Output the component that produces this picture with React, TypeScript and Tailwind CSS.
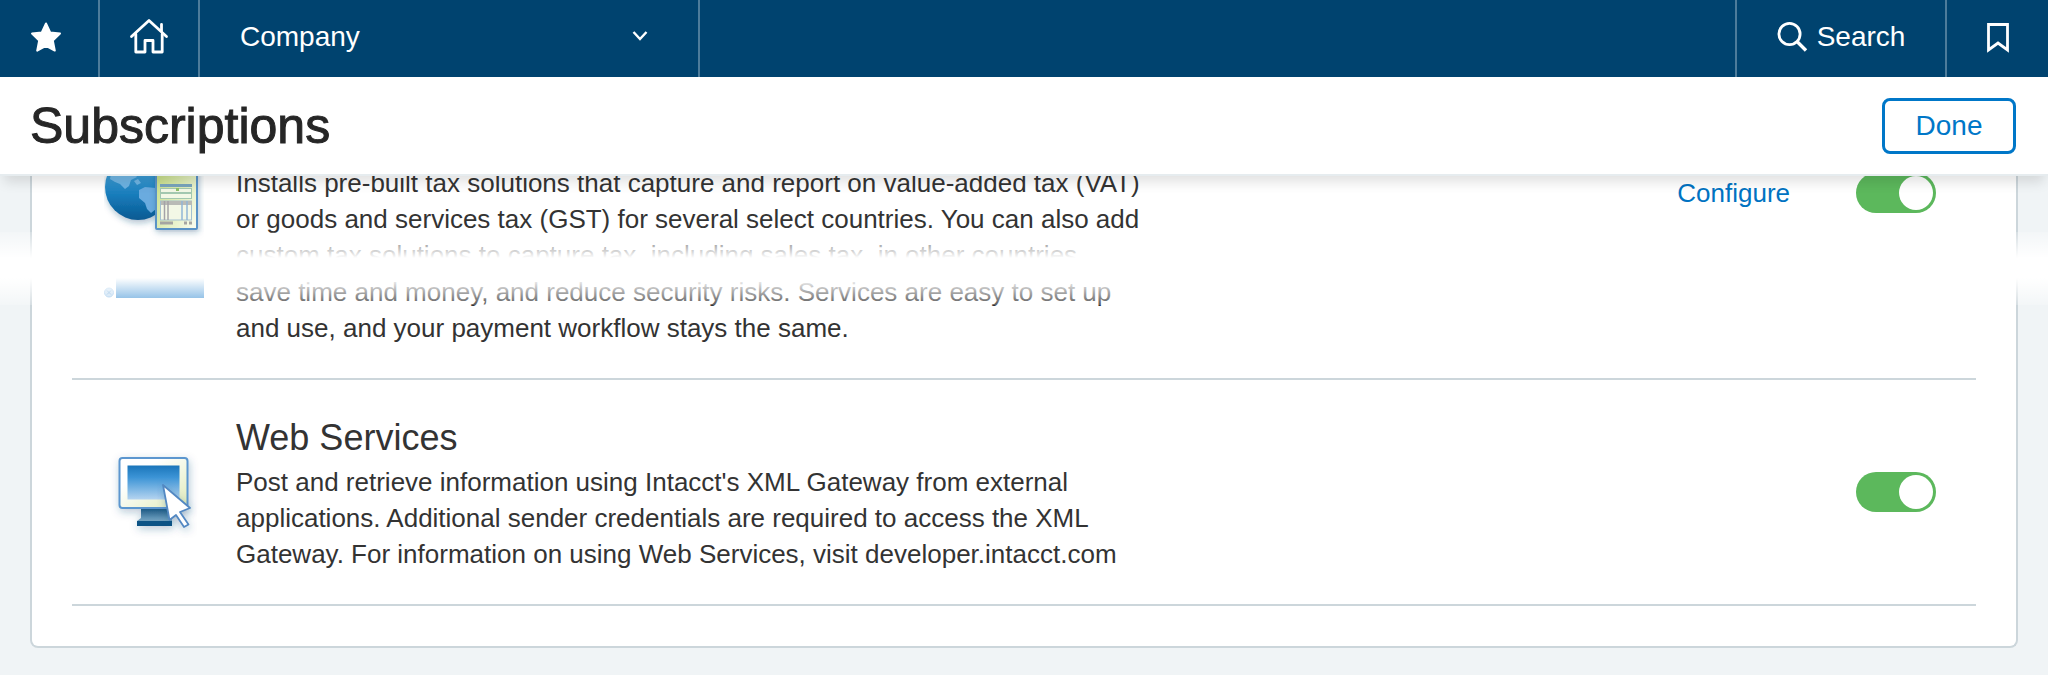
import { useState, type FC, type ReactNode } from "react"

const Star = () => (
  <svg className="size-8" viewBox="0 0 32 32" fill="#fff" aria-hidden="true">
    <path
      d="M16 2.500 20.200 11.400 30 12.600 22.800 19.400 24.800 29.600 16 24.800 7.200 29.600 9.200 19.400 2 12.600 11.800 11.400Z"
      stroke="#fff"
      strokeWidth="2"
      strokeLinejoin="round"
    />
  </svg>
)

const Home = () => (
  <svg
    className="size-10"
    viewBox="0 0 40 40"
    fill="none"
    stroke="#fff"
    strokeWidth="2.8"
    strokeLinecap="round"
    strokeLinejoin="round"
    aria-hidden="true"
  >
    <path d="M2.500 19.500 20 3.500 37.500 19.500" />
    <path d="M32.500 14V7.500" />
    <path d="M6.800 17V35H16V23.500H24V35H33.200V17" />
  </svg>
)

const Chevron = () => (
  <svg
    className="pointer-events-none size-5 shrink-0"
    viewBox="0 0 20 20"
    fill="none"
    stroke="#fff"
    strokeWidth="2.4"
    aria-hidden="true"
  >
    <path d="M3.500 5 10 12 16.500 5" />
  </svg>
)

const Magnifier = () => (
  <svg
    className="size-8"
    viewBox="0 0 32 32"
    fill="none"
    stroke="#fff"
    strokeWidth="2.8"
    aria-hidden="true"
  >
    <circle cx="12.500" cy="13" r="10.600" />
    <path d="M20 20.500 29 29.500" strokeWidth="3.400" />
  </svg>
)

const Bookmark = () => (
  <svg
    className="size-8"
    viewBox="0 0 32 32"
    fill="none"
    stroke="#fff"
    strokeWidth="2.800"
    aria-hidden="true"
  >
    <path d="M6.500 3.500H25.500V29L16 22 6.500 29Z" />
  </svg>
)

const TaxIcon = () => (
  <svg
    className="size-[100px] shrink-0"
    viewBox="0 0 100 100"
    aria-hidden="true"
  >
    <defs>
      <linearGradient id="globe" x1="0" y1="0" x2="0" y2="1">
        <stop offset="0.3" stopColor="#3f9fd8" />
        <stop offset="0.65" stopColor="#1479b8" />
        <stop offset="1" stopColor="#0d5a92" />
      </linearGradient>
      <linearGradient id="sheet" x1="0" y1="0" x2="1" y2="1">
        <stop offset="0.2" stopColor="#c9e08c" />
        <stop offset="1" stopColor="#fbfdf2" />
      </linearGradient>
      <filter id="soft" x="-20%" y="-20%" width="140%" height="150%">
        <feDropShadow
          dx="1"
          dy="3"
          stdDeviation="3"
          floodColor="#1b4f7a"
          floodOpacity="0.35"
        />
      </filter>
      <clipPath id="globeClip">
        <circle cx="34" cy="22" r="33" />
      </clipPath>
    </defs>
    <circle cx="34" cy="22" r="33" fill="url(#globe)" filter="url(#soft)" />
    <g clipPath="url(#globeClip)" fill="#8cc4ee">
      <path
        d="M8 4 28 5 33 12 27 15 25 21 21 24 16 19 11 17 6 14Z"
        opacity="0.7"
      />
      <path d="M30 16 34 14 37 18 33 20Z" opacity="0.7" />
      <path
        d="M35 25 41 22 52 23V44L47 48 43 44 41 38 35 33Z"
        fill="#6aabdf"
      />
    </g>
    <g filter="url(#soft)">
      <rect
        x="52"
        y="-12"
        width="41"
        height="76"
        rx="1"
        fill="url(#sheet)"
        stroke="#5a93c6"
        strokeWidth="2"
      />
    </g>
    <rect x="56" y="19" width="32" height="3" fill="#7aa5bd" />
    <g fill="#f3f8e6" stroke="#a3c8b0" strokeWidth="1">
      <rect x="56.500" y="23.500" width="31" height="4" />
      <rect x="56.500" y="28.500" width="31" height="5" />
      <rect x="56.500" y="36" width="31" height="19" stroke="#a3c0d0" />
    </g>
    <rect x="72" y="23" width="3" height="3" fill="#8fc06c" />
    <rect x="57" y="36" width="31" height="4" fill="#b9bbb6" />
    <path d="M60.500 36V55M64 36V55" stroke="#a5a2a8" strokeWidth="1.500" />
    <path d="M78 36V55M83 36V55" stroke="#93b7d6" strokeWidth="1.500" />
    <path
      d="M56 58H69M80 58H83M85 58H88"
      stroke="#a5a5a2"
      strokeWidth="3"
    />
  </svg>
)

const PaymentIcon = () => (
  <svg
    className="h-6 w-[100px] shrink-0"
    viewBox="0 0 100 24"
    aria-hidden="true"
  >
    <rect x="12" y="0" width="89" height="24" fill="#4e9ad8" />
    <circle
      cx="5"
      cy="18.500"
      r="4.500"
      fill="#b9d7f0"
      stroke="#8fbfe8"
      strokeWidth="1"
    />
    <path d="M3 16.500 7 20.500M7 16.500 3 20.500" stroke="#6ba6da" />
  </svg>
)

const MonitorIcon = () => (
  <svg
    className="size-[100px] shrink-0"
    viewBox="0 0 100 100"
    aria-hidden="true"
  >
    <defs>
      <linearGradient id="screen" x1="0" y1="0" x2="0" y2="1">
        <stop offset="0" stopColor="#1a75ba" />
        <stop offset="0.35" stopColor="#3c94d6" />
        <stop offset="1" stopColor="#b5d4f0" />
      </linearGradient>
      <linearGradient id="bezel" x1="0" y1="0" x2="1" y2="1">
        <stop offset="0.3" stopColor="#fff" />
        <stop offset="1" stopColor="#e0eab8" />
      </linearGradient>
      <linearGradient id="stand" x1="0" y1="0" x2="0" y2="1">
        <stop offset="0" stopColor="#0e4c78" />
        <stop offset="0.6" stopColor="#5f93b5" />
        <stop offset="1" stopColor="#8cb3cb" />
      </linearGradient>
      <filter id="glow" x="-20%" y="-20%" width="145%" height="145%">
        <feDropShadow
          dx="1"
          dy="3"
          stdDeviation="4"
          floodColor="#1b4f7a"
          floodOpacity="0.3"
        />
      </filter>
    </defs>
    <g filter="url(#glow)">
      <path d="M37 65H67V76L68 77V83H33V79L37 76Z" fill="url(#stand)" />
      <path d="M33 79H68V84H33Z" fill="#0f5285" />
      <rect
        x="15.500"
        y="16"
        width="68"
        height="50"
        rx="3"
        fill="url(#bezel)"
        stroke="#5b96cf"
        strokeWidth="2"
      />
    </g>
    <rect x="23.500" y="23.500" width="52" height="34" fill="url(#screen)" />
    <path
      d="M59 43 86 66 76 70 84.500 82.500 80 85 72 73 65.500 78Z"
      fill="#fff"
      stroke="#5288c2"
      strokeWidth="1.800"
      strokeLinejoin="round"
      filter="url(#glow)"
    />
  </svg>
)

const Toggle: FC<{ label: string }> = ({ label }) => {
  const [on, setOn] = useState(true)

  return (
    <input
      type="checkbox"
      role="switch"
      aria-label={label}
      checked={on}
      onChange={(evt) => setOn(evt.target.checked)}
      className="flex h-10 w-20 shrink-0 cursor-pointer appearance-none items-center rounded-full bg-gray-400 px-[3px] before:size-[34px] before:rounded-full before:bg-white checked:justify-end checked:bg-[#5cb85c]"
    />
  )
}

const Description: FC<{ title?: string; children: ReactNode }> = ({
  title,
  children,
}) => (
  <div className="w-[920px]">
    {title ? <h2 className="text-[36px] leading-[52px]">{title}</h2> : null}
    <p>{children}</p>
  </div>
)

const TopBar = () => (
  <nav className="flex h-[77px] bg-[#00436f] text-[28px] text-white">
    <button
      aria-label="Favorites"
      className="flex w-[100px] items-center border-r-2 border-[#4d7c9b] pb-1 pl-[30px]"
    >
      <Star />
    </button>
    <button
      aria-label="Home"
      className="flex w-[100px] items-center justify-center border-r-2 border-[#4d7c9b] pb-1"
    >
      <Home />
    </button>
    <label className="flex w-[500px] items-center border-r-2 border-[#4d7c9b] pr-12 pb-1">
      <select
        aria-label="Application"
        className="h-full grow cursor-pointer appearance-none bg-transparent pl-10"
      >
        <option>Company</option>
      </select>
      <Chevron />
    </label>
    <button className="ml-auto flex w-[210px] items-center justify-center gap-2 border-l-2 border-[#4d7c9b] pb-1">
      <Magnifier />
      Search
    </button>
    <button
      aria-label="Bookmarks"
      className="flex w-[103px] items-center justify-center border-l-2 border-[#4d7c9b] pb-1"
    >
      <Bookmark />
    </button>
  </nav>
)

export default function App() {
  return (
    <div className="min-h-screen bg-[#f0f4f6] font-['Liberation_Sans',Arial,sans-serif] text-[26px] leading-9 text-[#333]">
      <header className="relative z-10 border-b-2 border-[#e6ecef] bg-white shadow-[0_10px_12px_-4px_rgba(0,0,0,0.12)]">
        <TopBar />
        <div className="flex h-[97px] items-center justify-between pr-8 pl-[30px]">
          <h1 className="text-[50px] text-[#262626] [-webkit-text-stroke:1px_#262626]">
            Subscriptions
          </h1>
          <button className="h-14 w-[134px] rounded-lg border-3 border-[#0077c8] text-[28px] text-[#0077c8]">
            Done
          </button>
        </div>
      </header>

      <main className="relative -mt-[11px] pb-7">
        <section className="mx-[30px] rounded-b-lg border-2 border-t-0 border-[#ccd6db] bg-white px-10 pb-10">
          <div className="flex h-24 items-start gap-8 pr-10 pl-8">
            <TaxIcon />
            <Description>
              Installs pre-built tax solutions that capture and report on
              value-added tax (VAT) or goods and services tax (GST) for several
              select countries. You can also add custom tax solutions to capture
              tax, including sales tax, in other countries.
            </Description>
            <div className="mt-2 ml-auto flex items-center gap-[66px] leading-10">
              <a href="#configure" className="text-[#0073c2]">
                Configure
              </a>
              <Toggle label="Taxes" />
            </div>
          </div>

          <div className="relative flex items-start gap-8 border-b-2 border-[#ccd6db] bg-white pt-[13px] pr-10 pb-8 pl-8">
            <PaymentIcon />
            <Description>
              save time and money, and reduce security risks. Services are easy
              to set up and use, and your payment workflow stays the same.
            </Description>
          </div>

          <div className="flex items-center gap-8 border-b-2 border-[#ccd6db] py-8 pr-10 pl-8">
            <MonitorIcon />
            <Description title="Web Services">
              Post and retrieve information using Intacct&apos;s XML Gateway
              from external applications. Additional sender credentials are
              required to access the XML Gateway. For information on using Web
              Services, visit developer.intacct.com
            </Description>
            <div className="ml-auto">
              <Toggle label="Web Services" />
            </div>
          </div>
        </section>

        {/* fade between the two parts of the list */}
        <div
          aria-hidden="true"
          className="pointer-events-none absolute inset-x-0 top-[67px] h-[73px] bg-[linear-gradient(to_bottom,rgba(255,255,255,0.2),#fff_26px,#fff_46px,rgba(255,255,255,0.2))]"
        />
      </main>
    </div>
  )
}
